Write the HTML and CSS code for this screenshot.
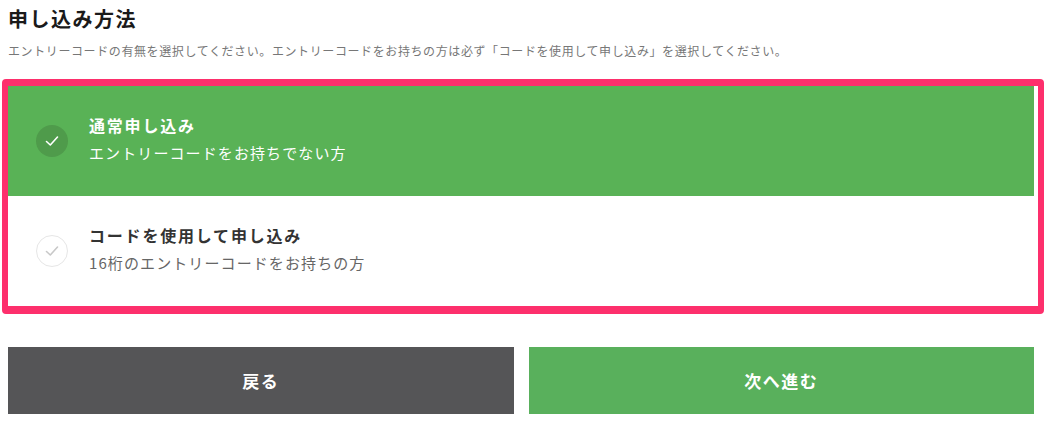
FILE: index.html
```html
<!DOCTYPE html>
<html lang="ja">
<head>
<meta charset="utf-8">
<link rel="stylesheet" href="styles.css">
</head>
<body>
<div class="page">
  <h1 class="title">申し込み方法</h1>
  <p class="lead">エントリーコードの有無を選択してください。エントリーコードをお持ちの方は必ず「コードを使用して申し込み」を選択してください。</p>
  <div class="choices">
    <div class="choice choice--active">
      <span class="check">
        <svg width="16" height="16" viewBox="0 0 16 16"><path d="M2.5 8.5 L6.3 12 L13.5 4" fill="none" stroke="currentColor" stroke-width="1.6" stroke-linecap="round" stroke-linejoin="round"/></svg>
      </span>
      <div class="choice-text">
        <div class="choice-title">通常申し込み</div>
        <div class="choice-sub">エントリーコードをお持ちでない方</div>
      </div>
    </div>
    <div class="choice">
      <span class="check">
        <svg width="16" height="16" viewBox="0 0 16 16"><path d="M2.5 8.5 L6.3 12 L13.5 4" fill="none" stroke="currentColor" stroke-width="1.6" stroke-linecap="round" stroke-linejoin="round"/></svg>
      </span>
      <div class="choice-text">
        <div class="choice-title">コードを使用して申し込み</div>
        <div class="choice-sub">16桁のエントリーコードをお持ちの方</div>
      </div>
    </div>
  </div>
  <div class="actions">
    <button class="btn btn--back">戻る</button>
    <button class="btn btn--next">次へ進む</button>
  </div>
</div>
</body>
</html>
```
FILE: styles.css
```css
* { box-sizing: border-box; }
body {
  margin: 0;
  background: #fff;
  font-family: "Noto Sans CJK JP", "Noto Sans", sans-serif;
  color: #333;
}
.page {
  padding: 4px 8px 0 8px;
}
.title {
  margin: 0;
  font-size: 20px;
  line-height: 30px;
  font-weight: 700;
  letter-spacing: 1.5px;
  color: #1a1a1a;
}
.lead {
  margin: 9px 0 0;
  font-size: 12px;
  line-height: 16px;
  letter-spacing: 0.6px;
  color: #777;
}
.choices {
  margin: 20px -6px 0 -6px;
  border: 6px solid #fd2f6c;
  border-width: 7px 6px 8px 6px;
  border-radius: 4px;
  background: #fff;
  padding-right: 4px;
}
.choice {
  display: flex;
  align-items: center;
  height: 110px;
  padding-left: 28px;
  background: #fff;
}
.choice + .choice { height: 110px; }
.choice--active {
  background: #59b256;
}
.check {
  flex: none;
  width: 32px;
  height: 32px;
  border-radius: 50%;
  display: flex;
  align-items: center;
  justify-content: center;
  border: 1px solid #e6e6e6;
  color: #c8c8c8;
  background: #fff;
}
.choice--active .check {
  border: none;
  background: #4f9b4b;
  color: #fff;
}
.choice-text {
  margin-left: 21px;
  padding-bottom: 6px;
}
.choice-title {
  font-size: 16px;
  line-height: 22px;
  font-weight: 700;
  letter-spacing: 1.8px;
  color: #333;
}
.choice-sub {
  margin-top: 7px;
  font-size: 15px;
  line-height: 20px;
  letter-spacing: 1.1px;
  color: #666;
}
.choice--active .choice-title,
.choice--active .choice-sub {
  color: #fff;
}
.actions {
  margin: 33px 4px 0 0;
  display: flex;
  gap: 15px;
}
.btn {
  flex: 1;
  height: 67px;
  border: none;
  font-family: inherit;
  font-size: 17px;
  font-weight: 700;
  letter-spacing: 1.5px;
  color: #fff;
}
.btn--back { background: #555557; }
.btn--next { background: #59b05c; }
```
